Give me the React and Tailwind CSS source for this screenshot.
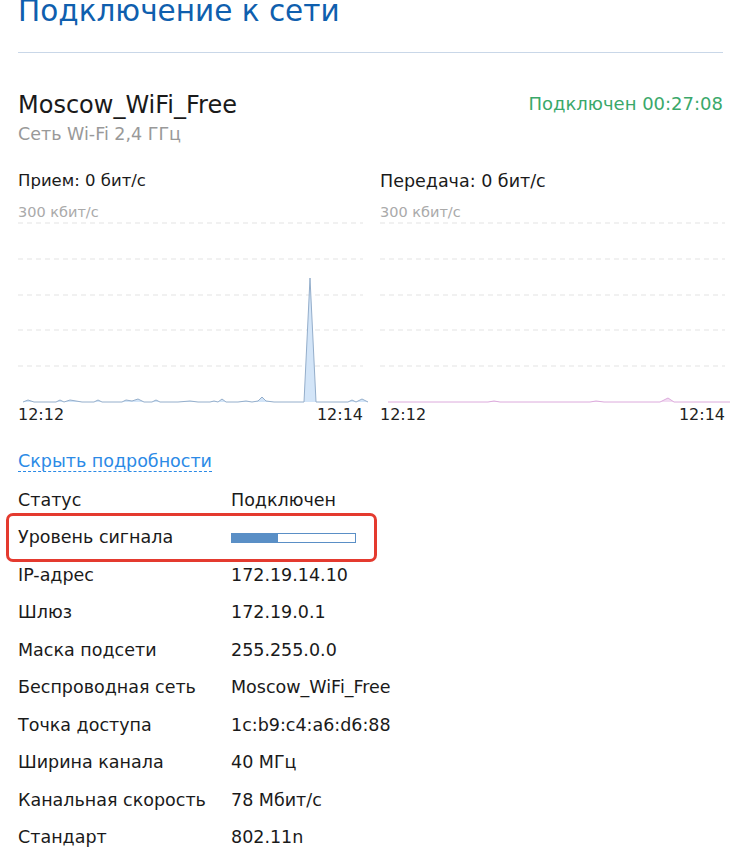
const rxPoints = [
  [5, 180], [10, 178], [16, 180], [38, 180], [42, 178], [46, 180], [52, 178], [58, 179],
  [64, 180], [76, 180], [80, 178], [84, 180], [104, 180], [108, 178], [114, 179], [120, 177],
  [126, 180], [134, 180], [138, 178], [142, 180], [160, 180], [172, 179], [180, 180], [192, 180],
  [196, 179], [200, 180], [204, 177], [208, 180], [220, 180], [228, 179], [234, 180], [240, 179],
  [244, 175], [248, 179], [256, 180], [270, 180], [280, 180], [286, 180], [292, 56], [298, 180],
  [318, 180], [330, 180], [334, 178], [338, 180], [344, 177], [350, 180],
];

const txPoints = [
  [8, 180], [40, 180], [108, 180], [114, 179], [120, 180], [210, 180], [216, 179], [224, 180],
  [280, 180], [288, 176], [294, 180], [350, 180],
];

const Chart = ({ points, stroke, fill, from, to }) => {
  const line = points.map((p) => p.join(",")).join(" ");
  const area = `${points[0][0]},180 ${line} ${points[points.length - 1][0]},180`;
  return (
    <div>
      <svg width="352" height="182" className="block overflow-visible mt-[2px]">
        {[1, 37, 73, 108, 144].map((y) => (
          <line key={y} x1="0" x2="345" y1={y} y2={y} stroke="#e3e3e3" strokeWidth="1" strokeDasharray="5 4" />
        ))}
        <polygon points={area} fill={fill} />
        <polyline points={line} fill="none" stroke={stroke} strokeWidth="1" />
      </svg>
      <div className="flex justify-between w-[345px] text-[16px] text-[#222] mt-[2px] leading-[18px]">
        <span>{from}</span>
        <span>{to}</span>
      </div>
    </div>
  );
};

const rows = [
  ["Статус", "Подключен"],
  ["Уровень сигнала", null],
  ["IP-адрес", "172.19.14.10"],
  ["Шлюз", "172.19.0.1"],
  ["Маска подсети", "255.255.0.0"],
  ["Беспроводная сеть", "Moscow_WiFi_Free"],
  ["Точка доступа", "1c:b9:c4:a6:d6:88"],
  ["Ширина канала", "40 МГц"],
  ["Канальная скорость", "78 Мбит/с"],
  ["Стандарт", "802.11n"],
];

const App = () => {
  return (
    <div className="w-[744px] h-[858px] overflow-hidden bg-white pl-[18px] pr-[21px] font-['DejaVu_Sans',Verdana,sans-serif] text-[#1a1a1a]">
      <h1 className="-mt-[6px] text-[29.5px] leading-[34px] text-[#0f5fae] font-normal">Подключение к сети</h1>
      <div className="mt-[24px] h-px bg-[#c9d7e8]" />

      <div className="mt-[38px] flex justify-between items-start">
        <div>
          <div className="text-[24px] leading-[28px]">Moscow_WiFi_Free</div>
          <div className="mt-[5px] text-[17.5px] leading-[20px] text-[#999]">Сеть Wi-Fi 2,4 ГГц</div>
        </div>
        <div className="mt-[1px] text-[18px] leading-[24px] text-[#3aa86a]">Подключен 00:27:08</div>
      </div>

      <div className="mt-[26px] grid grid-cols-[362px_1fr]">
        <div>
          <div className="text-[16.5px] leading-[22px]">Прием: 0 бит/с</div>
          <div className="mt-[12px] text-[14.5px] leading-[16px] text-[#aaa]">300 кбит/с</div>
          <Chart points={rxPoints} stroke="#94aecb" fill="#d3e5f8" from="12:12" to="12:14" />
        </div>
        <div>
          <div className="text-[17.5px] leading-[22px]">Передача: 0 бит/с</div>
          <div className="mt-[12px] text-[14.5px] leading-[16px] text-[#aaa]">300 кбит/с</div>
          <Chart points={txPoints} stroke="#dcaadc" fill="#f2dcf2" from="12:12" to="12:14" />
        </div>
      </div>

      <div className="mt-[26px] text-[17.5px] leading-[22px]">
        <span className="text-[#2b8ae6] border-b border-dashed border-[#2b8ae6]">Скрыть подробности</span>
      </div>

      <div className="mt-[9px] text-[17.5px]">
        {rows.map(([label, value]) => (
          <div key={label} className="relative flex h-[37.5px] items-center">
            <div className="w-[213px] shrink-0">{label}</div>
            {value !== null ? (
              <div>{value}</div>
            ) : (
              <>
                <div className="mt-[2px] w-[125px] h-[10px] border border-[#5a8fc6] bg-white">
                  <div className="w-[37%] h-full bg-[#5a8fc6]" />
                </div>
                <div className="absolute -left-[12px] top-[-6px] w-[371px] h-[49px] border-[3px] border-[#e43a2f] rounded-[7px]" />
              </>
            )}
          </div>
        ))}
      </div>
    </div>
  );
};

export default App;
